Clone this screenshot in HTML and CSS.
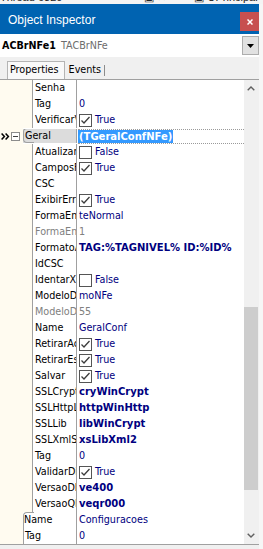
FILE: index.html
```html
<!DOCTYPE html>
<html>
<head>
<meta charset="utf-8">
<link rel="stylesheet" href="styles.css">
</head>
<body>
<div class="screen">
  <div class="bgstrip">
    <span class="bgt bgt1">Thread 6320</span>
    <span class="bgt bgt2">▣ ✕</span>
    <span class="bgt bgt3">▣ UPrincipal</span>
  </div>
  <div class="main">
    <div class="window">
      <div class="titlebar">
        <span class="title">Object Inspector</span>
        <div class="close"><svg width="6" height="6" viewBox="0 0 6 6"><path d="M0.5 0.5L5.5 5.5M5.5 0.5L0.5 5.5" stroke="#fff" stroke-width="1.5"/></svg></div>
      </div>
      <div class="combo">
        <span class="comp">ACBrNFe1</span>
        <span class="cls">TACBrNFe</span>
        <div class="dd"><svg width="7" height="4" viewBox="0 0 7 4"><path d="M0 0H7L3.5 4Z" fill="#000"/></svg></div>
      </div>
      <div class="tabs">
        <div class="tab active">Properties</div>
        <div class="tab">Events</div>
      </div>
      <div class="grid">
        <div class="rows">
          <div class="row l1"><div class="gut"></div><div class="nm">Senha</div><div class="val"></div></div>
          <div class="row l1"><div class="gut"></div><div class="nm">Tag</div><div class="val">0</div></div>
          <div class="row l1"><div class="gut"></div><div class="nm">VerificarValidade</div><div class="val"><span class="cb"><svg width="11" height="11" viewBox="0 0 11 11"><path d="M1.5 5.5L4 8L9.5 2" fill="none" stroke="#3c3c3c" stroke-width="1.3"/></svg></span>True</div></div>
          <div class="row l0 sel"><div class="gut"><svg class="mark" width="9" height="7" viewBox="0 0 9 7"><path d="M0.6 0.5L3.4 3.5L0.6 6.5M4.6 0.5L7.4 3.5L4.6 6.5" fill="none" stroke="#000" stroke-width="1.5"/></svg><span class="exp"></span></div><div class="nm">Geral</div><div class="val"><span class="edit"><span class="hl">(TGeralConfNFe)</span></span></div></div>
          <div class="row l1"><div class="gut"></div><div class="nm">AtualizarXMLCancelado</div><div class="val"><span class="cb"></span>False</div></div>
          <div class="row l1"><div class="gut"></div><div class="nm">CamposFatObrigatorios</div><div class="val"><span class="cb"><svg width="11" height="11" viewBox="0 0 11 11"><path d="M1.5 5.5L4 8L9.5 2" fill="none" stroke="#3c3c3c" stroke-width="1.3"/></svg></span>True</div></div>
          <div class="row l1"><div class="gut"></div><div class="nm">CSC</div><div class="val"></div></div>
          <div class="row l1"><div class="gut"></div><div class="nm">ExibirErroSchema</div><div class="val"><span class="cb"><svg width="11" height="11" viewBox="0 0 11 11"><path d="M1.5 5.5L4 8L9.5 2" fill="none" stroke="#3c3c3c" stroke-width="1.3"/></svg></span>True</div></div>
          <div class="row l1"><div class="gut"></div><div class="nm">FormaEmissao</div><div class="val">teNormal</div></div>
          <div class="row l1 ro"><div class="gut"></div><div class="nm">FormaEmissaoCodigo</div><div class="val">1</div></div>
          <div class="row l1"><div class="gut"></div><div class="nm">FormatoAlerta</div><div class="val b">TAG:%TAGNIVEL% ID:%ID%</div></div>
          <div class="row l1"><div class="gut"></div><div class="nm">IdCSC</div><div class="val"></div></div>
          <div class="row l1"><div class="gut"></div><div class="nm">IdentarXML</div><div class="val"><span class="cb"></span>False</div></div>
          <div class="row l1"><div class="gut"></div><div class="nm">ModeloDF</div><div class="val">moNFe</div></div>
          <div class="row l1 ro"><div class="gut"></div><div class="nm">ModeloDFCodigo</div><div class="val">55</div></div>
          <div class="row l1"><div class="gut"></div><div class="nm">Name</div><div class="val">GeralConf</div></div>
          <div class="row l1"><div class="gut"></div><div class="nm">RetirarAcentos</div><div class="val"><span class="cb"><svg width="11" height="11" viewBox="0 0 11 11"><path d="M1.5 5.5L4 8L9.5 2" fill="none" stroke="#3c3c3c" stroke-width="1.3"/></svg></span>True</div></div>
          <div class="row l1"><div class="gut"></div><div class="nm">RetirarEspacos</div><div class="val"><span class="cb"><svg width="11" height="11" viewBox="0 0 11 11"><path d="M1.5 5.5L4 8L9.5 2" fill="none" stroke="#3c3c3c" stroke-width="1.3"/></svg></span>True</div></div>
          <div class="row l1"><div class="gut"></div><div class="nm">Salvar</div><div class="val"><span class="cb"><svg width="11" height="11" viewBox="0 0 11 11"><path d="M1.5 5.5L4 8L9.5 2" fill="none" stroke="#3c3c3c" stroke-width="1.3"/></svg></span>True</div></div>
          <div class="row l1"><div class="gut"></div><div class="nm">SSLCryptLib</div><div class="val b">cryWinCrypt</div></div>
          <div class="row l1"><div class="gut"></div><div class="nm">SSLHttpLib</div><div class="val b">httpWinHttp</div></div>
          <div class="row l1"><div class="gut"></div><div class="nm">SSLLib</div><div class="val b">libWinCrypt</div></div>
          <div class="row l1"><div class="gut"></div><div class="nm">SSLXmlSignLib</div><div class="val b">xsLibXml2</div></div>
          <div class="row l1"><div class="gut"></div><div class="nm">Tag</div><div class="val">0</div></div>
          <div class="row l1"><div class="gut"></div><div class="nm">ValidarDigest</div><div class="val"><span class="cb"><svg width="11" height="11" viewBox="0 0 11 11"><path d="M1.5 5.5L4 8L9.5 2" fill="none" stroke="#3c3c3c" stroke-width="1.3"/></svg></span>True</div></div>
          <div class="row l1"><div class="gut"></div><div class="nm">VersaoDF</div><div class="val b">ve400</div></div>
          <div class="row l1"><div class="gut"></div><div class="nm">VersaoQRCode</div><div class="val b">veqr000</div></div>
          <div class="row l0 first"><div class="gut"></div><div class="nm">Name</div><div class="val">Configuracoes</div></div>
          <div class="row l0"><div class="gut"></div><div class="nm">Tag</div><div class="val">0</div></div>
        </div>
        <div class="vscroll">
          <div class="arrow"><svg width="8" height="5" viewBox="0 0 8 5"><path d="M0.7 4.3L4 1L7.3 4.3" fill="none" stroke="#606060" stroke-width="1.4"/></svg></div>
          <div class="track"><div class="thumb"></div></div>
          <div class="arrow"><svg width="8" height="5" viewBox="0 0 8 5"><path d="M0.7 0.7L4 4L7.3 0.7" fill="none" stroke="#606060" stroke-width="1.4"/></svg></div>
        </div>
      </div>
      <div class="bottom"></div>
    </div>
    <div class="side"></div>
  </div>
</div>
</body>
</html>
```

FILE: styles.css
```css
* { box-sizing: border-box; }
html, body { margin: 0; padding: 0; }
body {
  width: 263px;
  height: 549px;
  overflow: hidden;
  background: #f0f0f0;
  font-family: "DejaVu Sans Condensed", "DejaVu Sans", sans-serif;
  font-stretch: condensed;
}
.screen { display: flex; flex-direction: column; width: 263px; height: 549px; }

.bgstrip {
  height: 4px;
  overflow: hidden;
  background: #f4f4f4;
  display: flex;
  font-family: "Liberation Sans", sans-serif;
  font-size: 11px;
  line-height: 13px;
  color: #222;
}
.bgt { display: block; margin-top: -9px; white-space: nowrap; }
.bgt1 { margin-left: 0; }
.bgt2 { margin-left: 82px; }
.bgt3 { margin-left: 28px; }

.main { display: flex; flex: 1; min-height: 0; }
.window { width: 259px; display: flex; flex-direction: column; background: #fff; }
.side { width: 4px; background: #f6f6f6; }

.titlebar {
  height: 30px;
  background: #0063b1;
  display: flex;
  align-items: flex-start;
  padding-left: 8px;
  color: #fff;
}
.title {
  flex: 1;
  font-family: "Liberation Sans", sans-serif;
  font-size: 12px;
  line-height: 14px;
  margin-top: 9px;
}
.close {
  width: 19px;
  height: 19px;
  margin-top: 8px;
  background: #c75050;
  display: flex;
  align-items: center;
  justify-content: center;
}

.combo {
  height: 23px;
  display: flex;
  align-items: center;
  background: #fff;
  font-size: 10.7px;
  padding-left: 2px;
}
.comp {
  font-family: "DejaVu Sans", sans-serif;
  font-stretch: normal;
  font-size: 9.6px;
  font-weight: bold;
  color: #000;
  width: 59px;
}
.cls { color: #6d6d6d; }
.dd {
  margin-left: auto;
  width: 17px;
  height: 19px;
  background: #e1e1e1;
  border: 1px solid #adadad;
  display: flex;
  align-items: center;
  justify-content: center;
}

.tabs {
  height: 23px;
  background: #f0f0f0;
  border-bottom: 1px solid #a0a0a0;
  display: flex;
  align-items: flex-end;
  padding-left: 7px;
  font-size: 10.7px;
}
.tab {
  height: 17px;
  line-height: 16px;
  padding: 0 4px 0 2px;
  color: #000;
}
.tab.active {
  background: #f9f9f9;
  border: 1px solid #b4b4b4;
  border-bottom: none;
  height: 18px;
  padding-right: 5px;
}
.tab:not(.active) {
  margin-left: 2px;
  margin-bottom: 3px;
  height: 11px;
  line-height: 10px;
  border-right: 1px solid #8c8c8c;
  padding-right: 3px;
}

.grid { height: 464px; display: flex; }
.rows { flex: 1; display: flex; flex-direction: column; background: #fff; }
.row {
  height: 16px;
  display: flex;
  font-size: 10.7px;
  line-height: 16px;
  white-space: nowrap;
}
.gut { background: #fffbf0; flex: none; }
.l1 .gut { width: 32px; }
.l0 .gut { width: 23px; }
.nm {
  flex: none;
  overflow: hidden;
  color: #000;
  border-left: 1px solid #a0a0a0;
  border-right: 1px solid #a0a0a0;
  padding-left: 2px;
  position: relative;
}
.l1 .nm { width: 45px; }
.l0 .nm { width: 54px; padding-left: 1px; }
.val {
  flex: 1;
  overflow: hidden;
  color: #000080;
  padding-left: 2px;
  display: flex;
  align-items: center;
}
.val.b {
  font-family: "DejaVu Sans", sans-serif;
  font-stretch: normal;
  font-size: 10px;
  font-weight: bold;
}
.ro .nm, .ro .val { color: #808080; }

.cb {
  width: 13px;
  height: 13px;
  border: 1px solid #555;
  background: #fff;
  margin-right: 3px;
  margin-top: 1px;
  flex: none;
  display: flex;
}

.sel .gut { display: flex; align-items: center; position: relative; }
.mark { margin-left: 1px; margin-top: 1px; }
.exp {
  width: 9px;
  height: 9px;
  border: 1px solid #8c8c8c;
  background: #fff;
  margin-left: 1px;
  margin-top: 1px;
  position: relative;
}
.exp::after {
  content: "";
  position: absolute;
  left: 1px;
  top: 3px;
  width: 5px;
  height: 1px;
  background: #404040;
}
.sel .nm {
  border-left: none;
  background: #dcdcdc;
  margin: 1px 0;
  line-height: 14px;
  padding-left: 2px;
}
.sel .nm::before {
  content: "";
  position: absolute;
  left: 0;
  top: -1px;
  bottom: 0;
  width: 10px;
  border: 1px solid #a0a0a0;
  border-right: none;
  border-radius: 4px 0 0 4px;
}
.sel .val { padding-left: 1px; }
.edit {
  flex: 1;
  height: 15px;
  margin-top: 1px;
  border-top: 1px dotted #9a9a9a;
  border-bottom: 1px dotted #9a9a9a;
  display: flex;
  align-items: center;
}
.hl {
  background: #3399ff;
  color: #fff;
  font-family: "DejaVu Sans", sans-serif;
  font-stretch: normal;
  font-size: 10px;
  font-weight: bold;
  line-height: 13px;
  padding: 0 1px;
}

.first .nm { border-left: none; }
.first .nm::before {
  content: "";
  position: absolute;
  left: 0;
  top: 0;
  bottom: 0;
  width: 10px;
  border-top: 1px solid #a0a0a0;
  border-left: 1px solid #a0a0a0;
  border-top-left-radius: 4px;
}

.vscroll {
  width: 15px;
  background: #f0f0f0;
  display: flex;
  flex-direction: column;
}
.arrow { height: 17px; display: flex; align-items: center; justify-content: center; padding-right: 1px; }
.track { flex: 1; }
.thumb { margin-top: 210px; height: 183px; background: #cdcdcd; margin-right: 1px; }

.bottom {
  flex: 1;
  background: #f0f0f0;
  border-top: 1px solid #a0a0a0;
}
```
